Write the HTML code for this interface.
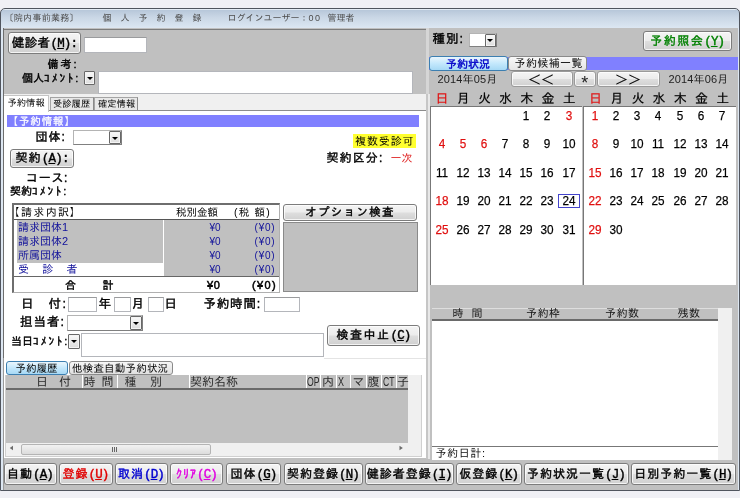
<!DOCTYPE html>
<html lang="ja">
<head>
<meta charset="utf-8">
<title>個人予約登録</title>
<style>
html,body{margin:0;padding:0;}
body{width:740px;height:498px;overflow:hidden;background:#f0f0f5;position:relative;
 font-family:"Liberation Sans","IPAGothic",sans-serif;font-size:12px;color:#000;will-change:transform;}
div,span{position:absolute;box-sizing:border-box;white-space:nowrap;line-height:1;}
.m{font-family:"Liberation Mono","IPAGothic",monospace;}
.b{font-weight:normal;-webkit-text-stroke:0.4px currentColor;}
.win{left:0;top:8px;width:740px;height:483px;border:1px solid #50555e;border-radius:5px 5px 0 0;
 background:linear-gradient(#e4ecf5 0px,#e4ecf5 1px,#b8c8da 1.5px,#c9d6e5 8px,#dae5f1 18px,#dde7f2 19px,#dde7f2 100%);}
.panel{background:#c0c0c0;}
.white{background:#fff;}
.btn{border:1px solid #7c7c7c;border-radius:3px;
 background:linear-gradient(#f4f4f4 0%,#ececec 48%,#dedede 52%,#d0d0d0 100%);
 box-shadow:inset 0 0 0 1px rgba(255,255,255,.75);text-align:center;-webkit-text-stroke:0.4px currentColor;}
.inp{background:#fff;border:1px solid #b4b6bb;border-top-color:#9a9b9d;}
.cb{background:#fff;border:1px solid #b4b4b4;border-right-color:#808080;border-bottom-color:#808080;}
.dd{border:1px solid #686868;border-radius:1px;background:linear-gradient(#fafafa,#dcdcdc);box-shadow:inset 0 0 0 1px #f4f4f4;}
.dd:after{content:"";position:absolute;left:50%;top:50%;margin-left:-3px;margin-top:-1px;
 border-left:3px solid transparent;border-right:3px solid transparent;border-top:3px solid #000;}
.peri{background:#8080ff;}
.cd{width:24px;text-align:center;font-size:13.5px;transform:scaleX(.87);-webkit-text-stroke:0.25px currentColor;}
.k{letter-spacing:2.3px;}
i{font-style:normal;font-family:"Liberation Mono",monospace;font-size:12.5px;letter-spacing:-0.8px;}
.wd{width:20px;text-align:center;font-size:13px;-webkit-text-stroke:0.2px currentColor;}
.ti{font-size:9px;color:#4c4c4c;top:14px;}
.bl{color:#10109a;}
.gh{font-size:12px;color:#2a2a2a;top:376px;}
.sep{width:1px;top:375px;height:13px;background:#fff;}
.lh{font-size:11px;color:#111;top:308px;letter-spacing:0.5px;}
.bb{top:463px;height:22px;font-size:12px;line-height:20px;letter-spacing:1px;}
</style>
</head>
<body>
<div class="win"></div>

<!-- title -->
<span class="ti" style="left:4.5px;letter-spacing:0.3px;">〔院内事前業務〕</span>
<span class="ti" style="left:102.5px;letter-spacing:9px;">個人予約登録</span>
<span class="ti" style="left:227.5px;">ログインユーザー：<span style="position:static;letter-spacing:1.5px;word-spacing:2px;">00 </span>管理者</span>

<!-- left top panel -->
<div class="panel" style="left:3px;top:27.5px;width:735px;height:462.5px;border-left:1px solid #9a9a9a;"></div>
<div style="left:2.5px;top:28px;width:1.5px;height:330px;background:#6e6e6e;"></div>
<div style="left:4px;top:28.5px;width:422px;height:1.5px;background:#7c7c7c;"></div>
<div class="btn" style="left:8px;top:32px;width:73px;height:22px;font-size:12.5px;line-height:20px;letter-spacing:0.4px;">健診者<i>(<u>M</u>):</i></div>
<div class="inp" style="left:84px;top:37px;width:63px;height:16px;"></div>
<span class="b" style="left:47.5px;top:58.5px;font-size:11px;letter-spacing:2px;">備考:</span>
<span class="b" style="left:22px;top:73px;font-size:11px;">個人<span class="k" style="position:static">ｺﾒﾝﾄ:</span></span>
<div class="dd" style="left:84px;top:71px;width:11px;height:14px;"></div>
<div class="white" style="left:98px;top:71px;width:315px;height:23px;border:1px solid #b4b6bb;"></div>

<!-- tabs -->
<div style="left:4px;top:94px;width:422px;height:17px;background:#f0f0f0;"></div>
<div style="left:50px;top:97px;width:44px;height:14px;border:1px solid #a4a4a4;border-right-color:#8a8a8a;border-bottom:none;background:#e8e8e8;"></div>
<div style="left:94px;top:97px;width:44px;height:14px;border:1px solid #a4a4a4;border-right-color:#8a8a8a;border-bottom:none;background:#e8e8e8;"></div>
<!-- tab page -->
<div class="white" style="left:4px;top:110px;width:422px;height:348px;border-top:1px solid #8c8c8c;"></div>
<div style="left:4px;top:94.5px;width:45px;height:17px;border:1px solid #c4c4c4;border-left:none;border-bottom:none;background:#fff;"></div>
<span style="left:7.5px;top:98.5px;font-size:9.3px;">予約情報</span>
<span style="left:53px;top:100px;font-size:9.3px;">受診履歴</span>
<span style="left:98px;top:100px;font-size:9.3px;">確定情報</span>

<div class="peri" style="left:7px;top:115px;width:412px;height:12px;"></div>
<span class="b" style="left:7.5px;top:116px;font-size:10.5px;color:#fff;letter-spacing:0.9px;-webkit-text-stroke-width:0.25px;">【予約情報】</span>
<span class="b" style="left:35.5px;top:131px;font-size:12px;letter-spacing:1px;">団体:</span>
<div class="cb" style="left:73px;top:130px;width:49px;height:15px;"></div>
<div class="dd" style="left:109px;top:131px;width:12px;height:13px;"></div>
<span style="left:353px;top:133.5px;width:62.5px;height:14.5px;background:#ffff30;"></span>
<span style="left:355px;top:135.5px;font-size:11px;letter-spacing:0.9px;">複数受診可</span>
<div class="btn" style="left:10px;top:148.5px;width:64px;height:19.5px;font-size:12px;line-height:17px;letter-spacing:1.2px;">契約<i>(<u>A</u>):</i></div>
<span class="b" style="left:326.5px;top:151.5px;font-size:12px;letter-spacing:1.1px;">契約区分:</span>
<span style="left:390.5px;top:152.5px;font-size:11px;color:#e02828;">一次</span>
<span class="b" style="left:26px;top:172px;font-size:12px;letter-spacing:0.7px;">コース:</span>
<span class="b" style="left:10px;top:186px;font-size:11px;">契約<span class="k" style="position:static">ｺﾒﾝﾄ:</span></span>

<!-- billing table -->
<div style="left:12px;top:203px;width:268px;height:90px;border:1px solid #b0b0b0;border-left:2px solid #6e6e6e;border-top:2px solid #6e6e6e;"></div>
<span style="left:8.5px;top:206.5px;font-size:11px;letter-spacing:1.4px;">【請求内訳<span style="position:static;margin-left:-1px">】</span></span>
<span style="left:176px;top:206.5px;font-size:10.5px;">税別金額</span>
<span style="left:234px;top:206.5px;font-size:10.5px;letter-spacing:1.2px;">(税 額)</span>
<div style="left:14px;top:219px;width:265px;height:1px;background:#555;"></div>
<div class="panel" style="left:16.5px;top:220px;width:146px;height:42.5px;"></div>
<div class="panel" style="left:164px;top:220px;width:115px;height:56px;"></div>
<div style="left:14px;top:276px;width:265px;height:1px;background:#666;"></div>
<span class="bl" style="left:18px;top:222px;font-size:11px;">請求団体1</span>
<span class="bl" style="left:18px;top:235.5px;font-size:11px;">請求団体2</span>
<span class="bl" style="left:18px;top:249.5px;font-size:11px;">所属団体</span>
<span class="bl" style="left:18px;top:263.5px;font-size:11px;letter-spacing:13.2px;">受診者</span>
<span class="bl" style="left:209.5px;top:222.5px;font-size:10px;">¥0</span>
<span class="bl" style="left:209.5px;top:236.5px;font-size:10px;">¥0</span>
<span class="bl" style="left:209.5px;top:251px;font-size:10px;">¥0</span>
<span class="bl" style="left:209.5px;top:265px;font-size:10px;">¥0</span>
<span class="bl" style="left:254.5px;top:222.5px;font-size:10px;letter-spacing:0.8px;">(¥0)</span>
<span class="bl" style="left:254.5px;top:236.5px;font-size:10px;letter-spacing:0.8px;">(¥0)</span>
<span class="bl" style="left:254.5px;top:251px;font-size:10px;letter-spacing:0.8px;">(¥0)</span>
<span class="bl" style="left:254.5px;top:265px;font-size:10px;letter-spacing:0.8px;">(¥0)</span>
<span class="b" style="left:65px;top:279.5px;font-size:11px;letter-spacing:26.5px;">合計</span>
<span class="b" style="left:207px;top:279.5px;font-size:11px;letter-spacing:0.6px;-webkit-text-stroke-width:0.5px;">¥0</span>
<span class="b" style="left:252px;top:279.5px;font-size:11px;letter-spacing:1.4px;-webkit-text-stroke-width:0.5px;">(¥0)</span>

<div class="btn" style="left:283px;top:204px;width:134px;height:16.5px;font-size:11.5px;line-height:14px;letter-spacing:1.3px;text-indent:0px;">オプション検査</div>
<div class="panel" style="left:283px;top:221.5px;width:134.5px;height:70.5px;border:1px solid #8a8a8a;"></div>

<!-- date row -->
<span class="b" style="left:21px;top:297.5px;font-size:12.5px;letter-spacing:1.3px;">日　付:</span>
<div class="inp" style="left:67.5px;top:296.5px;width:29px;height:15.5px;"></div>
<span class="b" style="left:98.5px;top:297.5px;font-size:12.5px;">年</span>
<div class="inp" style="left:114px;top:296.5px;width:17px;height:15.5px;"></div>
<span class="b" style="left:131.5px;top:297.5px;font-size:12.5px;">月</span>
<div class="inp" style="left:147.5px;top:296.5px;width:16.5px;height:15.5px;"></div>
<span class="b" style="left:164.5px;top:297.5px;font-size:12.5px;">日</span>
<span class="b" style="left:203.5px;top:297.5px;font-size:12.5px;letter-spacing:0.8px;">予約時間:</span>
<div class="inp" style="left:263.5px;top:297px;width:36px;height:15px;"></div>
<span class="b" style="left:20px;top:315.5px;font-size:12.5px;letter-spacing:1px;">担当者:</span>
<div class="cb" style="left:67px;top:315px;width:75.5px;height:15.5px;"></div>
<div class="dd" style="left:129.5px;top:316px;width:12.5px;height:13.5px;"></div>
<span class="b" style="left:11px;top:335.5px;font-size:11px;">当日<span class="k" style="position:static">ｺﾒﾝﾄ:</span></span>
<div class="dd" style="left:67.5px;top:334px;width:12px;height:14.5px;"></div>
<div class="white" style="left:81px;top:333px;width:243px;height:24px;border:1px solid #b4b6bb;"></div>
<div class="btn" style="left:327px;top:325px;width:93px;height:21px;font-size:12px;line-height:19px;letter-spacing:1.5px;">検査中止<i>(<u>C</u>)</i></div>
<div style="left:324px;top:357.5px;width:102px;height:1px;background:#e4e4e4;"></div>

<!-- lower tabs / grid -->
<div style="left:5.5px;top:360.5px;width:62.5px;height:14px;border:1px solid #3c7fb1;border-radius:3px;background:linear-gradient(#eaf6fd,#c4e8fc 50%,#a7d9f5);"></div>
<span style="left:15.5px;top:362.5px;font-size:10.5px;">予約履歴</span>
<div style="left:68.5px;top:360.5px;width:104.5px;height:14px;border:1px solid #8a8a8a;border-radius:3px;background:linear-gradient(#f6f6f6,#e0e0e0);"></div>
<span style="left:72px;top:362.5px;font-size:10.5px;letter-spacing:0.2px;">他検査自動予約状況</span>

<div style="left:5px;top:375px;width:417px;height:81.5px;background:#f0f0f0;border:1px solid #d0d0d0;border-top:none;"></div>
<div class="panel" style="left:5.5px;top:375px;width:402.5px;height:67.5px;"></div>
<div style="left:5.5px;top:388px;width:402.5px;height:2px;background:#6a6a6a;"></div>
<span class="gh" style="left:36px;letter-spacing:11px;">日付</span>
<span class="gh" style="left:83.5px;letter-spacing:6px;">時間</span>
<span class="gh" style="left:124.5px;letter-spacing:13.5px;">種別</span>
<span class="gh" style="left:190px;">契約名称</span>
<span class="gh" style="left:307px;transform:scaleX(.72);transform-origin:0 0;">OP</span>
<span class="gh" style="left:322px;">内</span>
<span class="gh" style="left:337.5px;transform:scaleX(.75);transform-origin:0 0;">X</span>
<span class="gh" style="left:352.5px;">マ</span>
<span class="gh" style="left:367.5px;">腹</span>
<span class="gh" style="left:383px;transform:scaleX(.72);transform-origin:0 0;">CT</span>
<span class="gh" style="left:397px;">子</span>
<div class="sep" style="left:82px;"></div>
<div class="sep" style="left:117px;"></div>
<div class="sep" style="left:188.5px;"></div>
<div class="sep" style="left:305.5px;"></div>
<div class="sep" style="left:320px;"></div>
<div class="sep" style="left:335.5px;"></div>
<div class="sep" style="left:350px;"></div>
<div class="sep" style="left:366px;"></div>
<div class="sep" style="left:380.5px;"></div>
<div class="sep" style="left:396px;"></div>
<div style="left:20.5px;top:443.5px;width:190px;height:11.5px;border:1px solid #b4b4b4;border-radius:2px;background:linear-gradient(#f2f2f2,#dcdcdc);"></div>
<span style="left:9.5px;top:444.5px;font-size:8px;color:#6c6c6c;">◀</span>
<span style="left:399px;top:444.5px;font-size:8px;color:#6c6c6c;">▶</span>
<span style="left:111.5px;top:446.5px;width:1px;height:5px;background:#666;"></span>
<span style="left:113.5px;top:446.5px;width:1px;height:5px;background:#666;"></span>
<span style="left:115.5px;top:446.5px;width:1px;height:5px;background:#666;"></span>

<!-- splitter -->
<div style="left:426px;top:28px;width:2.5px;height:66px;background:#d6d6d6;"></div>
<div style="left:425.5px;top:94px;width:2px;height:365px;background:#c6c6c6;"></div>
<div style="left:427.5px;top:94px;width:2px;height:365px;background:#e8e8e8;"></div>
<div class="panel" style="left:4px;top:459px;width:733px;height:30.5px;"></div>

<!-- bottom buttons -->
<div class="btn bb" style="left:3.5px;width:53px;">自動<i>(<u>A</u>)</i></div>
<div class="btn bb" style="left:58.5px;width:54px;color:#e00000;">登録<i>(<u>U</u>)</i></div>
<div class="btn bb" style="left:114.5px;width:53px;color:#0000d0;">取消<i>(<u>D</u>)</i></div>
<div class="btn bb" style="left:170px;width:53px;color:#e000e0;font-size:12px;">ｸﾘｱ<i>(<u>C</u>)</i></div>
<div class="btn bb" style="left:226px;width:55px;">団体<i>(<u>G</u>)</i></div>
<div class="btn bb" style="left:283.5px;width:79px;">契約登録<i>(<u>N</u>)</i></div>
<div class="btn bb" style="left:364.5px;width:89.5px;">健診者登録<i>(<u>I</u>)</i></div>
<div class="btn bb" style="left:456px;width:65.5px;">仮登録<i>(<u>K</u>)</i></div>
<div class="btn bb" style="left:523.5px;width:105px;">予約状況一覧<i>(<u>J</u>)</i></div>
<div class="btn bb" style="left:630.5px;width:105.5px;">日別予約一覧<i>(<u>H</u>)</i></div>

<!-- right panel -->
<span class="b" style="left:432.5px;top:33px;font-size:12.5px;letter-spacing:1px;">種別:</span>
<div class="cb" style="left:468.5px;top:32.5px;width:28px;height:14.5px;"></div>
<div class="dd" style="left:484.5px;top:33.5px;width:11.5px;height:13px;"></div>
<div class="btn" style="left:643px;top:30.5px;width:88.5px;height:20.5px;font-size:12px;line-height:18px;color:#008000;letter-spacing:1.5px;">予約照会<i>(<u>Y</u>)</i></div>

<div class="peri" style="left:429px;top:56.5px;width:309px;height:13px;"></div>
<div style="left:429px;top:56px;width:78.5px;height:14.5px;border:1px solid #3c7fb1;border-radius:3px;background:linear-gradient(#eaf6fd,#c4e8fc 50%,#a7d9f5);"></div>
<span class="b" style="left:446px;top:58.5px;font-size:11px;color:#0000c8;">予約状況</span>
<div style="left:508px;top:56px;width:78.5px;height:14.5px;border:1px solid #8a8a8a;border-radius:3px;background:linear-gradient(#f8f8f8,#e4e4e4);"></div>
<span style="left:514.5px;top:58px;font-size:11px;letter-spacing:0.4px;">予約候補一覧</span>

<span style="left:437.5px;top:73.5px;font-size:11px;color:#222;letter-spacing:0.15px;">2014年05月</span>
<div class="btn" style="left:510.5px;top:71px;width:62px;height:16px;border-color:#9a9a9a;font-size:12px;line-height:17px;letter-spacing:1px;-webkit-text-stroke:0.15px #000;">＜＜</div>
<div class="btn" style="left:573.5px;top:71px;width:22.5px;height:16px;border-color:#9a9a9a;font-size:18px;line-height:23px;-webkit-text-stroke:0;color:#222;overflow:hidden;">*</div>
<div class="btn" style="left:597px;top:71px;width:63px;height:16px;border-color:#9a9a9a;font-size:12px;line-height:17px;letter-spacing:1px;-webkit-text-stroke:0.15px #000;">＞＞</div>
<span style="left:668.5px;top:73.5px;font-size:11px;color:#222;letter-spacing:0.15px;">2014年06月</span>

<div class="white" style="left:429.5px;top:106px;width:152px;height:178.5px;border-top:1px solid #777;border-left:1px solid #777;"></div>
<div class="white" style="left:583px;top:106px;width:152.5px;height:178.5px;border-top:1px solid #777;border-left:1px solid #777;"></div>
<span class="wd" style="left:432.0px;top:92px;color:#e01010;">日</span>
<span class="wd" style="left:453.2px;top:92px;color:#000;">月</span>
<span class="wd" style="left:474.4px;top:92px;color:#000;">火</span>
<span class="wd" style="left:495.6px;top:92px;color:#000;">水</span>
<span class="wd" style="left:516.8px;top:92px;color:#000;">木</span>
<span class="wd" style="left:538.0px;top:92px;color:#000;">金</span>
<span class="wd" style="left:559.2px;top:92px;color:#000;">土</span>
<span class="wd" style="left:585.5px;top:92px;color:#e01010;">日</span>
<span class="wd" style="left:606.7px;top:92px;color:#000;">月</span>
<span class="wd" style="left:627.9px;top:92px;color:#000;">火</span>
<span class="wd" style="left:649.1px;top:92px;color:#000;">水</span>
<span class="wd" style="left:670.3px;top:92px;color:#000;">木</span>
<span class="wd" style="left:691.5px;top:92px;color:#000;">金</span>
<span class="wd" style="left:712.7px;top:92px;color:#000;">土</span>
<span class="cd" style="left:514.3px;top:108.7px;color:#000;">1</span>
<span class="cd" style="left:535.4px;top:108.7px;color:#000;">2</span>
<span class="cd" style="left:556.5px;top:108.7px;color:#e01010;">3</span>
<span class="cd" style="left:430.0px;top:137.2px;color:#e01010;">4</span>
<span class="cd" style="left:451.1px;top:137.2px;color:#e01010;">5</span>
<span class="cd" style="left:472.2px;top:137.2px;color:#e01010;">6</span>
<span class="cd" style="left:493.2px;top:137.2px;color:#000;">7</span>
<span class="cd" style="left:514.3px;top:137.2px;color:#000;">8</span>
<span class="cd" style="left:535.4px;top:137.2px;color:#000;">9</span>
<span class="cd" style="left:556.5px;top:137.2px;color:#000;">10</span>
<span class="cd" style="left:430.0px;top:165.7px;color:#000;">11</span>
<span class="cd" style="left:451.1px;top:165.7px;color:#000;">12</span>
<span class="cd" style="left:472.2px;top:165.7px;color:#000;">13</span>
<span class="cd" style="left:493.2px;top:165.7px;color:#000;">14</span>
<span class="cd" style="left:514.3px;top:165.7px;color:#000;">15</span>
<span class="cd" style="left:535.4px;top:165.7px;color:#000;">16</span>
<span class="cd" style="left:556.5px;top:165.7px;color:#000;">17</span>
<span class="cd" style="left:430.0px;top:194.2px;color:#e01010;">18</span>
<span class="cd" style="left:451.1px;top:194.2px;color:#000;">19</span>
<span class="cd" style="left:472.2px;top:194.2px;color:#000;">20</span>
<span class="cd" style="left:493.2px;top:194.2px;color:#000;">21</span>
<span class="cd" style="left:514.3px;top:194.2px;color:#000;">22</span>
<span class="cd" style="left:535.4px;top:194.2px;color:#000;">23</span>
<div style="left:558.0px;top:194.0px;width:22px;height:14px;border:1px solid #4444cc;"></div>
<span class="cd" style="left:556.5px;top:194.2px;color:#000;">24</span>
<span class="cd" style="left:430.0px;top:222.7px;color:#e01010;">25</span>
<span class="cd" style="left:451.1px;top:222.7px;color:#000;">26</span>
<span class="cd" style="left:472.2px;top:222.7px;color:#000;">27</span>
<span class="cd" style="left:493.2px;top:222.7px;color:#000;">28</span>
<span class="cd" style="left:514.3px;top:222.7px;color:#000;">29</span>
<span class="cd" style="left:535.4px;top:222.7px;color:#000;">30</span>
<span class="cd" style="left:556.5px;top:222.7px;color:#000;">31</span>
<span class="cd" style="left:583.2px;top:108.7px;color:#e01010;">1</span>
<span class="cd" style="left:604.3px;top:108.7px;color:#000;">2</span>
<span class="cd" style="left:625.4px;top:108.7px;color:#000;">3</span>
<span class="cd" style="left:646.4px;top:108.7px;color:#000;">4</span>
<span class="cd" style="left:667.5px;top:108.7px;color:#000;">5</span>
<span class="cd" style="left:688.6px;top:108.7px;color:#000;">6</span>
<span class="cd" style="left:709.7px;top:108.7px;color:#000;">7</span>
<span class="cd" style="left:583.2px;top:137.2px;color:#e01010;">8</span>
<span class="cd" style="left:604.3px;top:137.2px;color:#000;">9</span>
<span class="cd" style="left:625.4px;top:137.2px;color:#000;">10</span>
<span class="cd" style="left:646.4px;top:137.2px;color:#000;">11</span>
<span class="cd" style="left:667.5px;top:137.2px;color:#000;">12</span>
<span class="cd" style="left:688.6px;top:137.2px;color:#000;">13</span>
<span class="cd" style="left:709.7px;top:137.2px;color:#000;">14</span>
<span class="cd" style="left:583.2px;top:165.7px;color:#e01010;">15</span>
<span class="cd" style="left:604.3px;top:165.7px;color:#000;">16</span>
<span class="cd" style="left:625.4px;top:165.7px;color:#000;">17</span>
<span class="cd" style="left:646.4px;top:165.7px;color:#000;">18</span>
<span class="cd" style="left:667.5px;top:165.7px;color:#000;">19</span>
<span class="cd" style="left:688.6px;top:165.7px;color:#000;">20</span>
<span class="cd" style="left:709.7px;top:165.7px;color:#000;">21</span>
<span class="cd" style="left:583.2px;top:194.2px;color:#e01010;">22</span>
<span class="cd" style="left:604.3px;top:194.2px;color:#000;">23</span>
<span class="cd" style="left:625.4px;top:194.2px;color:#000;">24</span>
<span class="cd" style="left:646.4px;top:194.2px;color:#000;">25</span>
<span class="cd" style="left:667.5px;top:194.2px;color:#000;">26</span>
<span class="cd" style="left:688.6px;top:194.2px;color:#000;">27</span>
<span class="cd" style="left:709.7px;top:194.2px;color:#000;">28</span>
<span class="cd" style="left:583.2px;top:222.7px;color:#e01010;">29</span>
<span class="cd" style="left:604.3px;top:222.7px;color:#000;">30</span>

<!-- right list -->
<div class="white" style="left:432px;top:308px;width:286px;height:151.5px;"></div>
<div style="left:718px;top:308px;width:13.5px;height:151.5px;background:#f0f0f0;"></div>
<div style="left:432px;top:308px;width:286px;height:12.5px;background:#c0c0c0;border-bottom:2px solid #6a6a6a;border-top:1px solid #dedede;"></div>
<div style="left:432px;top:445.5px;width:286px;height:1px;background:#777;"></div>
<span class="lh" style="left:452.5px;letter-spacing:8px;">時間</span>
<span class="lh" style="left:526px;">予約枠</span>
<span class="lh" style="left:605px;">予約数</span>
<span class="lh" style="left:677.5px;">残数</span>
<span style="left:435.5px;top:447.5px;font-size:11px;color:#111;letter-spacing:0.6px;">予約日計:</span>
</body>
</html>
